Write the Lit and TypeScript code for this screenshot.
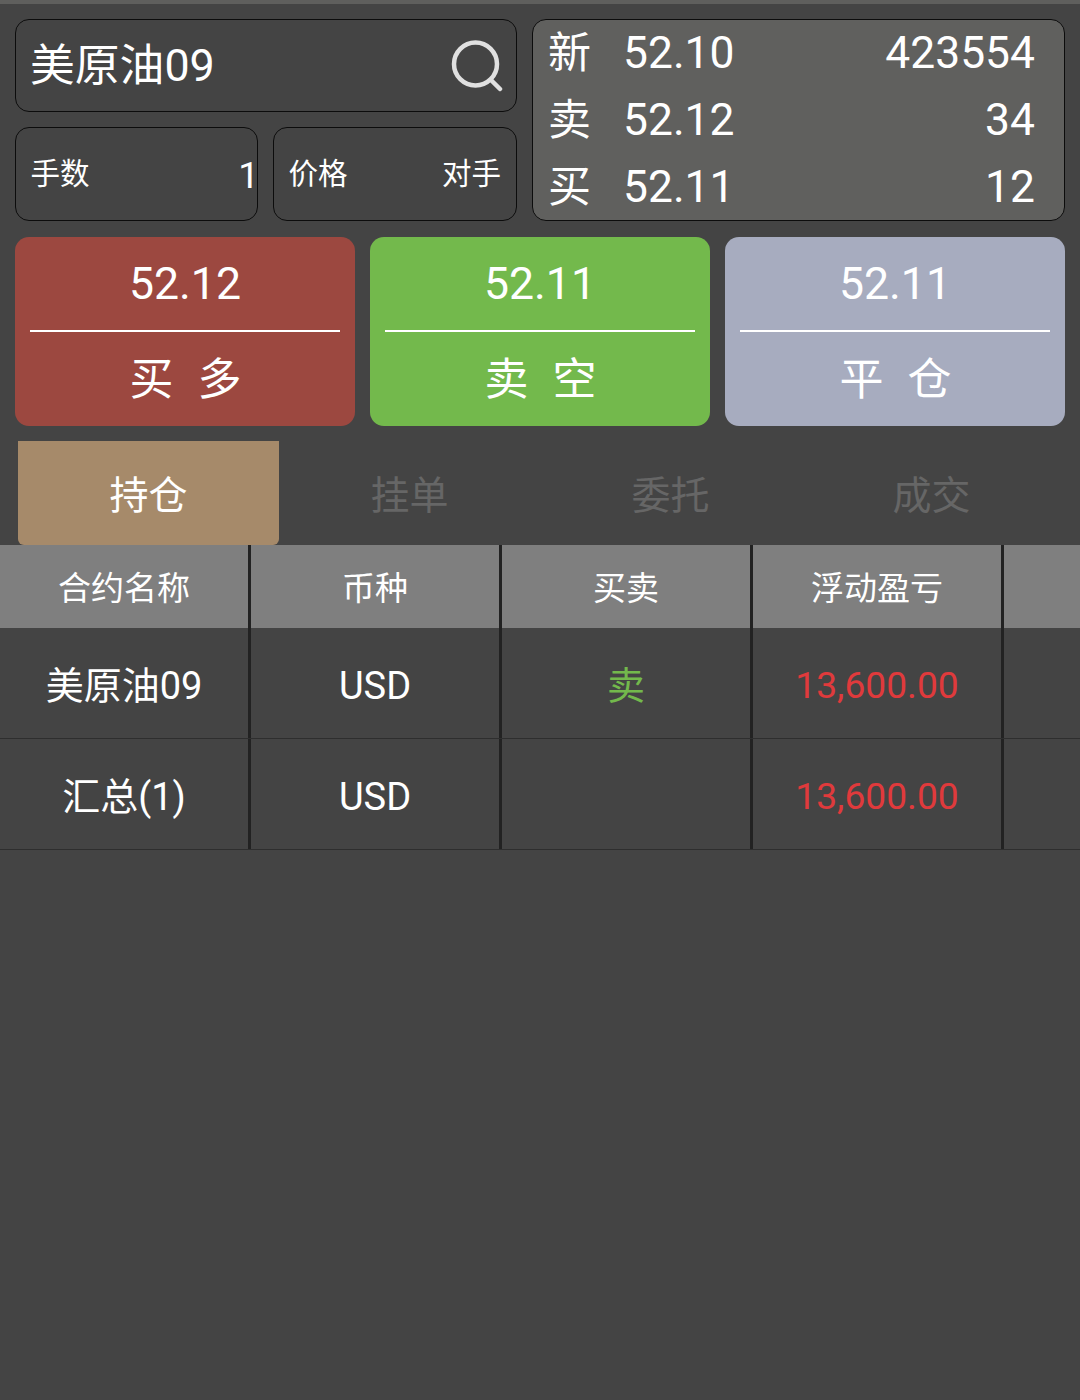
import { LitElement, html, css } from "lit";
import { customElement } from "lit/decorators.js";

@customElement("app-root")
export class AppRoot extends LitElement {
  static styles = css`
    :host { display: block; width: 1080px; height: 1400px; background: #444444; font-family: Roboto, "Noto Sans CJK SC", sans-serif; color: #fff; overflow: hidden; line-height: 1; }
    .statusline { height: 4px; background: #5f5f5d; }
    .top { display: flex; gap: 15px; padding: 15px 15px 0; }
    .left { width: 502px; display: flex; flex-direction: column; gap: 15px; }
    .box { border: 1px solid #0c0c0c; border-radius: 14px; box-sizing: border-box; }
    .search { height: 93px; display: flex; align-items: center; justify-content: space-between; padding: 2px 13px 0 14px; font-size: 44.8px; }
    .search svg { display: block; width: 52px; height: 52px; margin-top: -2px; }
    .pair { display: flex; gap: 15px; }
    .small { width: 244px; height: 94px; display: flex; align-items: center; justify-content: space-between; padding: 2px 15px 0 14.5px; font-size: 29.5px; }
    .small.lots { width: 243px; padding: 2px 0 0 14.5px; }
    .small .one { font-size: 37px; margin-right: -2px; }
    .quote { width: 533px; height: 202px; background: #60605e; padding: 0 29px 0 15px; display: flex; flex-direction: column; }
    .q { flex: none; height: 67px; display: flex; align-items: center; font-size: 44.4px; }
    .q .k { width: 75px; font-size: 43px; }
    .q .p { flex: 1; }
    .actions { display: flex; gap: 15px; padding: 16px 15px 0; }
    .act { flex: 1; height: 189px; border-radius: 14px; display: flex; flex-direction: column; padding: 0 15px; box-sizing: border-box; text-align: center; }
    .act .v { height: 95px; border-bottom: 2px solid #fff; padding-top: 2px; display: flex; align-items: center; justify-content: center; font-size: 44.6px; box-sizing: border-box; }
    .act .l { flex: 1; display: flex; align-items: center; justify-content: center; font-size: 44px; gap: 24px; padding: 2px 0 0 1px; }
    .buy { background: #9c4840; }
    .sell { background: #73b94c; }
    .close { background: #a7acbf; }
    .tabs { display: flex; padding: 15px 18px 0; }
    .tab { flex: 1; height: 104px; box-sizing: border-box; padding-top: 7px; display: flex; align-items: center; justify-content: center; font-size: 39px; color: #666666; }
    .tab.on { background: #a68a6a; color: #fff; border-radius: 0 0 6px 6px; }
    .row { display: flex; }
    .cell { width: 251px; box-sizing: border-box; border-right: 3px solid #222222; display: flex; align-items: center; justify-content: center; }
    .cell:last-child { flex: 1; width: auto; border-right: 0; }
    .head { height: 83px; background: #7f7f7f; font-size: 33px; }
    .head .cell { padding-top: 3px; }
    .body { height: 111px; font-size: 38px; border-bottom: 1px solid #2e2e2e; box-sizing: border-box; }
    .body .cell { padding-top: 5px; }
    .red { color: #e03a3c; font-size: 37.2px; }
    .green { color: #73b94c; }
  `;

  render() {
    const rows = [
      ["美原油09", "USD", "卖", "13,600.00"],
      ["汇总(1)", "USD", "", "13,600.00"],
    ];
    return html`
      <div class="statusline"></div>
      <div class="top">
        <div class="left">
          <div class="box search">
            <span>美原油09</span>
            <svg viewBox="0 0 52 52" fill="none" stroke="#e0e0e0" stroke-width="4.5" stroke-linecap="round">
              <circle cx="24.5" cy="24" r="21.5"></circle>
              <path d="M40 40 L49 49"></path>
            </svg>
          </div>
          <div class="pair">
            <div class="box small lots"><span>手数</span><span class="one">1</span></div>
            <div class="box small"><span>价格</span><span>对手</span></div>
          </div>
        </div>
        <div class="box quote">
          <div class="q"><span class="k">新</span><span class="p">52.10</span><span>423554</span></div>
          <div class="q"><span class="k">卖</span><span class="p">52.12</span><span>34</span></div>
          <div class="q"><span class="k">买</span><span class="p">52.11</span><span>12</span></div>
        </div>
      </div>
      <div class="actions">
        <div class="act buy"><div class="v">52.12</div><div class="l"><span>买</span><span>多</span></div></div>
        <div class="act sell"><div class="v">52.11</div><div class="l"><span>卖</span><span>空</span></div></div>
        <div class="act close"><div class="v">52.11</div><div class="l"><span>平</span><span>仓</span></div></div>
      </div>
      <div class="tabs">
        <div class="tab on">持仓</div>
        <div class="tab">挂单</div>
        <div class="tab">委托</div>
        <div class="tab">成交</div>
      </div>
      <div class="row head">
        <div class="cell">合约名称</div>
        <div class="cell">币种</div>
        <div class="cell">买卖</div>
        <div class="cell">浮动盈亏</div>
        <div class="cell"></div>
      </div>
      ${rows.map(
        (r) => html`<div class="row body">
          <div class="cell">${r[0]}</div>
          <div class="cell">${r[1]}</div>
          <div class="cell green">${r[2]}</div>
          <div class="cell red">${r[3]}</div>
          <div class="cell"></div>
        </div>`
      )}
    `;
  }
}
